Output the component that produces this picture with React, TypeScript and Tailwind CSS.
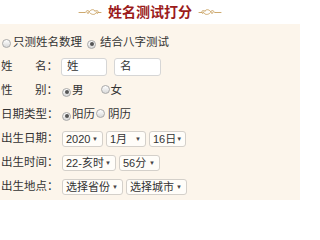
import React from "react";

const FONT = { fontFamily: '"Liberation Sans", "Noto Sans CJK SC", sans-serif' };

function Radio({ checked }: { checked?: boolean }) {
  return (
    <span className="inline-flex items-center justify-center w-[9px] h-[9px] rounded-full border border-[#a9a9a9] bg-gradient-to-b from-white to-[#d9d9d9] shrink-0">
      {checked && <span className="w-[4px] h-[4px] rounded-full bg-[#555]" />}
    </span>
  );
}

function Ornament({ flip }: { flip?: boolean }) {
  return (
    <svg
      width="24"
      height="8"
      viewBox="0 0 24 8"
      className={flip ? "-scale-x-100" : ""}
    >
      <g fill="none" stroke="#c8a060" strokeWidth="0.9" strokeLinecap="round">
        <path d="M1 4.5 H7" />
        <path d="M7 4.5 C9 2 11 2 11 4 C11 6 9 6 9 4.5" />
        <path d="M11 4 C13 1 16 1 17 3" />
        <path d="M12 5 C14 7 17 7 18 5" />
        <path d="M17 3 C19 2 21 3 20 5 C19 6 18 5 18.5 4" />
        <path d="M20 4.5 H23" />
      </g>
    </svg>
  );
}

function Select({ label, w }: { label: string; w: string }) {
  return (
    <div
      className={`flex items-center justify-between h-[16px] ${w} pl-[3px] pr-[4px] border border-[#d4d0ca] rounded-[3px] bg-[#fffdf9] text-[11px] text-[#333] whitespace-nowrap`}
    >
      <span className="leading-none">{label}</span>
      <span className="text-[6px] leading-none text-[#444]">▼</span>
    </div>
  );
}

function Label({ chars }: { chars: string[] }) {
  return (
    <div className="flex justify-between w-[58px] shrink-0 pl-[1px] whitespace-nowrap">
      {chars.map((c, i) => (
        <span key={i}>{c}</span>
      ))}
    </div>
  );
}

export default function App() {
  return (
    <div className="w-[300px] h-[200px] overflow-hidden bg-[#fcf5eb] text-[11.5px] text-[#333] whitespace-nowrap" style={FONT}>
      <div className="h-[24px] bg-white flex items-center justify-center gap-[6px]">
        <Ornament />
        <span className="text-[14px] font-bold text-[#9b1b1b] leading-none">姓名测试打分</span>
        <Ornament flip />
      </div>

      <div className="pt-[7px]">
        <div className="h-6 flex items-center pl-[2px]">
          <Radio />
          <span className="ml-[2px]">只测姓名数理</span>
          <span className="ml-[5px]"><Radio checked /></span>
          <span className="ml-[4px]">结合八字测试</span>
        </div>

        <div className="h-6 flex items-center">
          <Label chars={["姓", "名："]} />
          <div className="ml-[3px] w-[46px] h-[18px] border border-[#d6d6d6] rounded-[3px] bg-white pl-[5px] flex items-center">姓</div>
          <div className="ml-[7px] w-[47px] h-[18px] border border-[#d6d6d6] rounded-[3px] bg-white pl-[5px] flex items-center">名</div>
        </div>

        <div className="h-6 flex items-center">
          <Label chars={["性", "别："]} />
          <span className="ml-[4px]"><Radio checked /></span>
          <span className="ml-[1px]">男</span>
          <span className="ml-[17px]"><Radio /></span>
          <span className="ml-[1px]">女</span>
        </div>

        <div className="h-6 flex items-center">
          <Label chars={["日期类型："]} />
          <span className="ml-[4px]"><Radio checked /></span>
          <span className="ml-[1px]">阳历</span>
          <span className="ml-[1px]"><Radio /></span>
          <span className="ml-[3px]">阴历</span>
        </div>

        <div className="h-6 flex items-center">
          <Label chars={["出生日期："]} />
          <div className="ml-[4px] flex gap-[3px]">
            <Select label="2020" w="w-[41px]" />
            <Select label="1月" w="w-[40px]" />
            <Select label="16日" w="w-[37px]" />
          </div>
        </div>

        <div className="h-6 flex items-center">
          <Label chars={["出生时间："]} />
          <div className="ml-[4px] flex gap-[3px]">
            <Select label="22-亥时" w="w-[54px]" />
            <Select label="56分" w="w-[41px]" />
          </div>
        </div>

        <div className="h-6 flex items-center">
          <Label chars={["出生地点："]} />
          <div className="ml-[4px] flex gap-[3px]">
            <Select label="选择省份" w="w-[61px]" />
            <Select label="选择城市" w="w-[61px]" />
          </div>
        </div>
      </div>
    </div>
  );
}
